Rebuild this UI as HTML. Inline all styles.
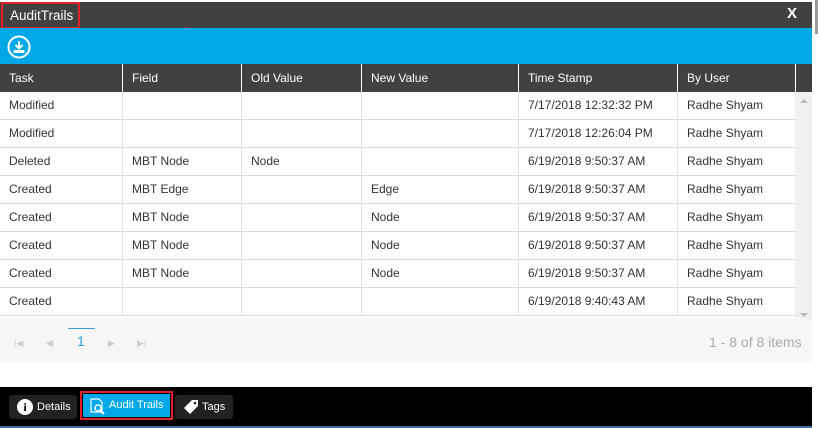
<!DOCTYPE html>
<html><head><style>
*{margin:0;padding:0;box-sizing:border-box}
body{width:821px;height:428px;background:#fff;font-family:"Liberation Sans",Arial,sans-serif;position:relative;overflow:hidden;font-size:12px;color:#333}
.a{position:absolute}
.title{left:0;top:2px;width:812px;height:26px;background:#414141}
.blue{left:0;top:28px;width:812px;height:36px;background:#00a8e8}
.hdr{left:0;top:64px;width:812px;height:28px;background:#414141}
.hdr div{position:absolute;top:0;height:28px;line-height:28px;color:#fff;padding-left:9px;border-left:1px solid #fff}
.row{position:absolute;left:0;width:795px;height:28px;border-bottom:1px solid #d9d9d9}
.row div{position:absolute;top:0;height:28px;line-height:27px;padding-left:9px;border-left:1px solid #e0e0e0}
</style></head><body>
<div class="a" style="left:812px;top:0;width:9px;height:428px;background:#fff"></div>
<div class="a" style="left:815px;top:0;width:3px;height:34px;background:#999"></div>
<div class="a title"></div>
<div class="a" style="left:1px;top:2px;width:79px;height:27px;border:2px solid #e0202a;color:#fff;font-size:13.5px;line-height:23px;padding-left:7px;white-space:nowrap">AuditTrails</div>
<div class="a" style="left:185px;top:27px;width:3px;height:3px;background:#c0203a"></div>
<div class="a" style="left:787px;top:5px;color:#fff;font-weight:bold;font-size:15px">X</div>
<div class="a blue"></div>
<svg class="a" style="left:7px;top:35px" width="24" height="24" viewBox="0 0 24 24"><circle cx="12" cy="12" r="10.5" fill="none" stroke="#fff" stroke-width="2"/><path d="M12 6v7M8.5 10l3.5 3.5 3.5-3.5" stroke="#fff" stroke-width="2" fill="none"/><rect x="6.5" y="15" width="11" height="3" fill="#fff"/></svg>
<div class="a hdr">
<div style="left:-1px;width:123px">Task</div>
<div style="left:122px;width:119px">Field</div>
<div style="left:241px;width:120px">Old Value</div>
<div style="left:361px;width:157px">New Value</div>
<div style="left:518px;width:159px">Time Stamp</div>
<div style="left:677px;width:118px">By User</div>
<div style="left:795px;width:17px"></div>
</div>
<div class="a" style="left:795px;top:92px;width:17px;height:226px;background:#f0f0f0"></div>
<div class="a" style="left:800px;top:99px;border-bottom:4px solid #bbb;border-left:4px solid transparent;border-right:4px solid transparent"></div>
<div class="a" style="left:800px;top:313px;border-top:4px solid #bbb;border-left:4px solid transparent;border-right:4px solid transparent"></div>
<div class="row" style="top:92px"><div style="left:-1px">Modified</div><div style="left:122px"></div><div style="left:241px"></div><div style="left:361px"></div><div style="left:518px">7/17/2018 12:32:32 PM</div><div style="left:677px">Radhe Shyam</div></div>
<div class="row" style="top:120px"><div style="left:-1px">Modified</div><div style="left:122px"></div><div style="left:241px"></div><div style="left:361px"></div><div style="left:518px">7/17/2018 12:26:04 PM</div><div style="left:677px">Radhe Shyam</div></div>
<div class="row" style="top:148px"><div style="left:-1px">Deleted</div><div style="left:122px">MBT Node</div><div style="left:241px">Node</div><div style="left:361px"></div><div style="left:518px">6/19/2018 9:50:37 AM</div><div style="left:677px">Radhe Shyam</div></div>
<div class="row" style="top:176px"><div style="left:-1px">Created</div><div style="left:122px">MBT Edge</div><div style="left:241px"></div><div style="left:361px">Edge</div><div style="left:518px">6/19/2018 9:50:37 AM</div><div style="left:677px">Radhe Shyam</div></div>
<div class="row" style="top:204px"><div style="left:-1px">Created</div><div style="left:122px">MBT Node</div><div style="left:241px"></div><div style="left:361px">Node</div><div style="left:518px">6/19/2018 9:50:37 AM</div><div style="left:677px">Radhe Shyam</div></div>
<div class="row" style="top:232px"><div style="left:-1px">Created</div><div style="left:122px">MBT Node</div><div style="left:241px"></div><div style="left:361px">Node</div><div style="left:518px">6/19/2018 9:50:37 AM</div><div style="left:677px">Radhe Shyam</div></div>
<div class="row" style="top:260px"><div style="left:-1px">Created</div><div style="left:122px">MBT Node</div><div style="left:241px"></div><div style="left:361px">Node</div><div style="left:518px">6/19/2018 9:50:37 AM</div><div style="left:677px">Radhe Shyam</div></div>
<div class="row" style="top:288px"><div style="left:-1px">Created</div><div style="left:122px"></div><div style="left:241px"></div><div style="left:361px"></div><div style="left:518px">6/19/2018 9:40:43 AM</div><div style="left:677px">Radhe Shyam</div></div>
<div class="a" style="left:0;top:318px;width:812px;height:44px;background:#f6f6f6"></div>
<div class="a" style="left:68px;top:328px;width:27px;height:1px;background:#3aa0d0"></div>
<div class="a" style="left:77px;top:333px;color:#2a9fd6;font-size:14px">1</div>
<div class="a" style="left:14px;top:338px;color:#ccc;font-size:9px">|◀</div>
<div class="a" style="left:46px;top:338px;color:#ccc;font-size:9px">◀</div>
<div class="a" style="left:108px;top:338px;color:#ccc;font-size:9px">▶</div>
<div class="a" style="left:137px;top:338px;color:#ccc;font-size:9px">▶|</div>
<div class="a" style="left:709px;top:334px;color:#aaa;font-size:14px">1 - 8 of 8 items</div>
<div class="a" style="left:0;top:387px;width:812px;height:39px;background:#000"></div>
<div class="a" style="left:0;top:426px;width:812px;height:2px;background:#3a6fa0"></div>
<div class="a" style="left:9px;top:395px;width:68px;height:24px;background:#222;border-radius:3px;color:#fff;line-height:24px;padding-left:28px;font-size:11px">Details</div>
<div class="a" style="left:17px;top:399px;width:16px;height:16px;border-radius:50%;background:#fff;color:#000;font-weight:bold;font-size:12px;text-align:center;line-height:16px;font-family:'Liberation Serif',serif">i</div>
<div class="a" style="left:80px;top:391px;width:93px;height:29px;border:2px solid #e0202a"></div>
<div class="a" style="left:83px;top:394px;width:87px;height:23px;background:#00a8e8;color:#fff;line-height:23px;padding-left:26px;font-size:11px">Audit Trails</div>
<svg class="a" style="left:89px;top:397px" width="18" height="18" viewBox="0 0 18 18"><path d="M2 2h8l3 3v10H2z" fill="none" stroke="#cfefff" stroke-width="1.5"/><circle cx="9" cy="11" r="3" fill="none" stroke="#fff" stroke-width="1.5"/><path d="M11 13l4 4" stroke="#fff" stroke-width="2"/></svg>
<div class="a" style="left:175px;top:395px;width:58px;height:24px;background:#222;border-radius:3px;color:#fff;line-height:24px;padding-left:27px;font-size:11px">Tags</div>
<svg class="a" style="left:183px;top:399px" width="16" height="16" viewBox="0 0 16 16"><path d="M9 1h6v6l-8 8-6-6z" fill="#fff"/><circle cx="12" cy="4" r="1.3" fill="#222"/></svg>
</body></html>
